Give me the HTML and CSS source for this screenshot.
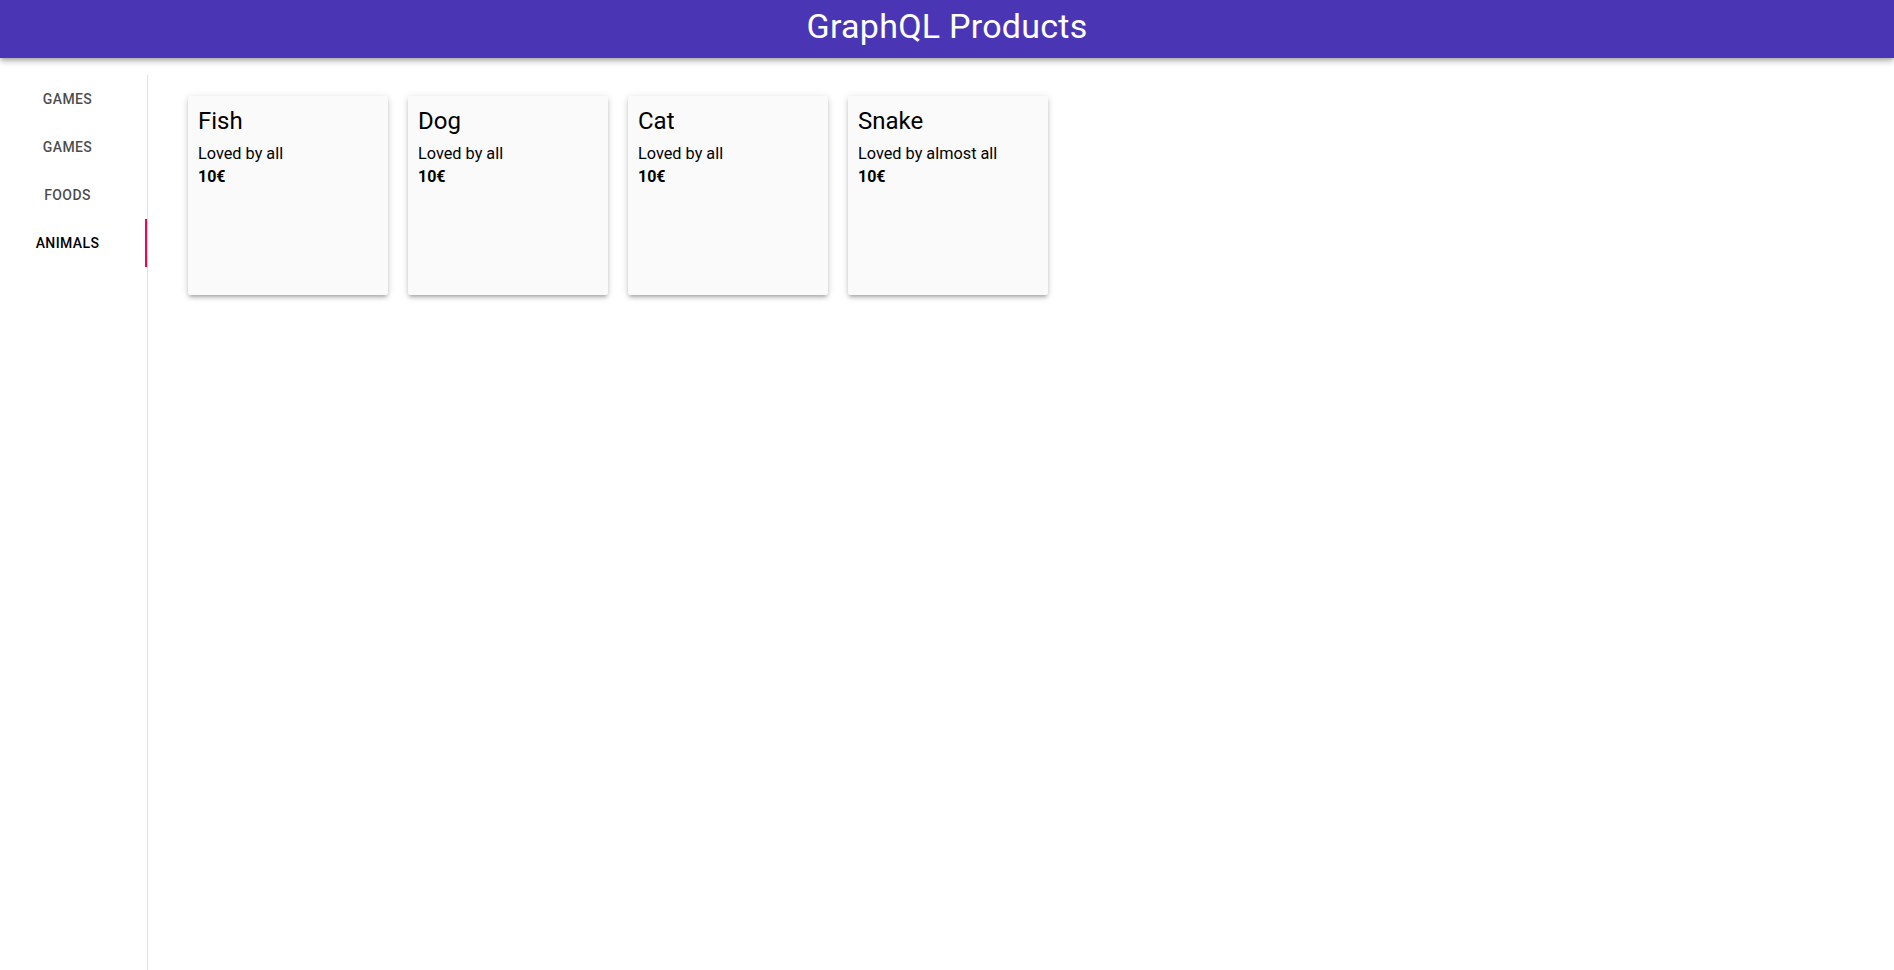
FILE: index.html
```html
<!DOCTYPE html>
<html lang="en">
<head>
<meta charset="utf-8">
<title>GraphQL Products</title>
<link rel="stylesheet" href="styles.css">
</head>
<body>
<header class="appbar">
  <h1 class="appbar-title">GraphQL Products</h1>
</header>
<div class="layout">
  <nav class="tabs">
    <button class="tab">Games</button>
    <button class="tab">Games</button>
    <button class="tab">Foods</button>
    <button class="tab tab-active">Animals</button>
  </nav>
  <main class="products">
    <div class="card">
      <h2 class="card-title">Fish</h2>
      <p class="card-desc">Loved by all</p>
      <p class="card-price">10€</p>
    </div>
    <div class="card">
      <h2 class="card-title">Dog</h2>
      <p class="card-desc">Loved by all</p>
      <p class="card-price">10€</p>
    </div>
    <div class="card">
      <h2 class="card-title">Cat</h2>
      <p class="card-desc">Loved by all</p>
      <p class="card-price">10€</p>
    </div>
    <div class="card">
      <h2 class="card-title">Snake</h2>
      <p class="card-desc">Loved by almost all</p>
      <p class="card-price">10€</p>
    </div>
  </main>
</div>
</body>
</html>
```

FILE: styles.css
```css
* { box-sizing: border-box; }
html, body {
  margin: 0;
  padding: 0;
  background: #ffffff;
  font-family: Roboto, "Liberation Sans", Arial, sans-serif;
  color: #000;
}
.appbar {
  position: relative;
  z-index: 2;
  height: 58px;
  background: #4a36b5;
  color: #ffffff;
  padding: 5px 0 11px;
  box-shadow: 0px 2px 4px -1px rgba(0,0,0,0.2), 0px 4px 5px 0px rgba(0,0,0,0.14), 0px 1px 10px 0px rgba(0,0,0,0.12);
}
.appbar-title {
  margin: 0;
  font-size: 34px;
  font-weight: 400;
  line-height: 42px;
  text-align: center;
  letter-spacing: 0.25px;
}
.layout {
  display: flex;
  margin-top: 17px;
  height: calc(100vh - 75px);
}
.tabs {
  width: 148px;
  flex: none;
  display: flex;
  flex-direction: column;
  border-right: 1px solid #e0e0e0;
}
.tab {
  height: 48px;
  width: 147px;
  border: 0;
  background: transparent;
  padding: 0 12px 0 0;
  font-family: Roboto, "Liberation Sans", Arial, sans-serif;
  font-size: 14px;
  font-weight: 500;
  letter-spacing: 0.4px;
  text-transform: uppercase;
  color: #000;
  opacity: 0.7;
  text-align: center;
  cursor: pointer;
}
.tab-active {
  opacity: 1;
  box-shadow: inset -2px 0 0 #f50057;
}
.products {
  flex: 1;
  display: flex;
  align-items: flex-start;
  gap: 20px;
  padding: 21px 0 0 40px;
}
.card {
  width: 200px;
  height: 199px;
  background: #fafafa;
  padding: 9px 10px;
  border-radius: 2px;
  box-shadow: 0px 3px 3px -2px rgba(0,0,0,0.2), 0px 3px 4px 0px rgba(0,0,0,0.14), 0px 1px 8px 0px rgba(0,0,0,0.12);
}
.card-title {
  margin: 0 0 5px;
  font-size: 24px;
  font-weight: 400;
  line-height: 32px;
}
.card-desc {
  margin: 0;
  font-size: 16.3px;
  line-height: 23px;
}
.card-price {
  margin: 0;
  font-size: 16px;
  font-weight: 700;
  line-height: 24px;
}
```
